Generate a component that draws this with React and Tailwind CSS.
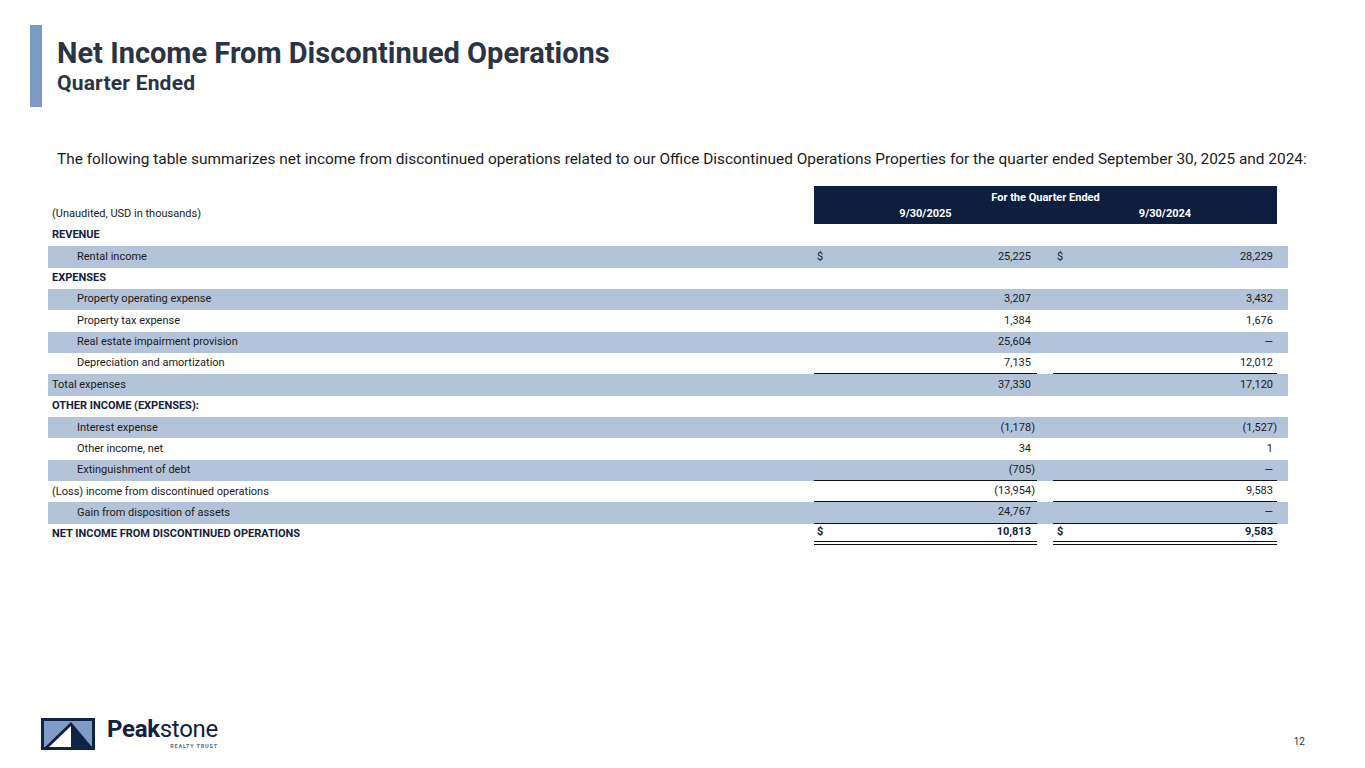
/* ----------------------------------------------------------------------------------------------
App.jsx
Net income from discontinued operations slide
------------------------------------------------------------------------------------------------- */

const rows = [
  { label: "REVENUE", kind: "head" },
  { label: "Rental income", a: "25,225", b: "28,229", dollar: true, indent: true, shade: true },
  { label: "EXPENSES", kind: "head" },
  { label: "Property operating expense", a: "3,207", b: "3,432", indent: true, shade: true },
  { label: "Property tax expense", a: "1,384", b: "1,676", indent: true },
  { label: "Real estate impairment provision", a: "25,604", b: "—", indent: true, shade: true },
  { label: "Depreciation and amortization", a: "7,135", b: "12,012", indent: true, line: "single" },
  { label: "Total expenses", a: "37,330", b: "17,120", shade: true },
  { label: "OTHER INCOME (EXPENSES):", kind: "head" },
  { label: "Interest expense", a: "(1,178)", b: "(1,527)", indent: true, shade: true },
  { label: "Other income, net", a: "34", b: "1", indent: true },
  { label: "Extinguishment of debt", a: "(705)", b: "—", indent: true, shade: true, line: "single" },
  { label: "(Loss) income from discontinued operations", a: "(13,954)", b: "9,583", line: "single" },
  { label: "Gain from disposition of assets", a: "24,767", b: "—", indent: true, shade: true, line: "single" },
  { label: "NET INCOME FROM DISCONTINUED OPERATIONS", a: "10,813", b: "9,583", dollar: true, bold: true, line: "double" },
];

// number with the closing paren hanging to the right, accounting style
function Num({ value }) {
  if (value.endsWith(")")) {
    return (
      <span>
        {value.slice(0, -1)}
        <span className="mr-[-4px]">)</span>
      </span>
    );
  }
  return <span>{value}</span>;
}

function ValueCell({ value, dollar, line, pl, pr }) {
  const lineCls =
    line === "single"
      ? "border-b-[1.5px] border-[#111]"
      : line === "double"
      ? "border-b-4 border-double border-[#111]"
      : "";
  return (
    <div className={`h-full flex items-center justify-between ${pl} ${pr} ${lineCls}`}>
      <span>{dollar ? "$" : ""}</span>
      <Num value={value} />
    </div>
  );
}

function Row({ row }) {
  if (row.kind === "head") {
    return (
      <div className="h-[21.35px] flex items-center pl-[4px] font-bold text-[#14213d]">
        {row.label}
      </div>
    );
  }
  return (
    <div
      className={`h-[21.35px] grid grid-cols-[766px_223px_16px_224px_11px] items-center ${
        row.shade ? "bg-[#b3c3d9]" : ""
      } ${row.bold ? "font-bold text-[#14213d]" : ""}`}
    >
      <div className={row.indent ? "pl-[29px]" : "pl-[4px]"}>{row.label}</div>
      <ValueCell value={row.a} dollar={row.dollar} line={row.line} pl="pl-[3px]" pr="pr-[6px]" />
      <div />
      <ValueCell value={row.b} dollar={row.dollar} line={row.line} pl="pl-[4px]" pr="pr-[4px]" />
      <div />
    </div>
  );
}

function Logo() {
  return (
    <div className="flex items-end gap-[12px]">
      <svg width="54" height="32" viewBox="0 0 54 32">
        <rect x="0" y="0" width="54" height="32" fill="#0f2443" />
        <rect x="3" y="3" width="48" height="26" fill="#7f9cc6" />
        <polygon points="30,4 4,29 51,29" fill="#0f2443" />
        <polygon points="30,8 8,29 30,29" fill="#ffffff" />
      </svg>
      <div className="flex flex-col items-end">
        <div className="text-[24px] leading-[26px] text-[#14213d] tracking-[-0.3px]">
          <span className="font-bold">Peak</span>
          <span>stone</span>
        </div>
        <div className="text-[5.5px] leading-[7px] tracking-[0.8px] text-[#5a6f8f] font-bold mt-[1px]">
          REALTY TRUST
        </div>
      </div>
    </div>
  );
}

export default function App() {
  return (
    <div
      className="w-[1365px] h-[768px] bg-white flex flex-col overflow-hidden"
      style={{ fontFamily: "Roboto, 'Liberation Sans', sans-serif" }}
    >
      {/* Title block */}
      <div className="flex pt-[25px] pl-[30px]">
        <div className="w-[12px] h-[82px] bg-[#7b9bc6]" />
        <div className="pl-[15px] pt-[12px]">
          <h1 className="text-[29px] leading-[32px] font-bold text-[#2b3345]">
            Net Income From Discontinued Operations
          </h1>
          <h2 className="text-[21px] leading-[24px] font-bold text-[#2b3345] tracking-[0.2px] mt-[2px]">
            Quarter Ended
          </h2>
        </div>
      </div>

      {/* Description */}
      <p className="pl-[57px] mt-[42px] text-[15.4px] leading-[20px] text-[#1a1a1a] whitespace-nowrap">
        The following table summarizes net income from discontinued operations related to our Office Discontinued
        Operations Properties for the quarter ended September 30, 2025 and 2024:
      </p>

      {/* Table */}
      <div className="ml-[48px] w-[1240px] mt-[17px] text-[11px] text-[#1a1a1a]">
        <div className="h-[38px] grid grid-cols-[766px_463px_11px]">
          <div className="flex items-end pl-[4px] pb-[2px]">(Unaudited, USD in thousands)</div>
          <div className="bg-[#0c1f3f] text-white font-bold flex flex-col pt-[5px]">
            <div className="text-center leading-[14px]">For the Quarter Ended</div>
            <div className="grid grid-cols-[223px_16px_224px] leading-[14px] mt-[2px]">
              <div className="text-center">9/30/2025</div>
              <div />
              <div className="text-center">9/30/2024</div>
            </div>
          </div>
          <div />
        </div>
        <div className="mt-[1px]">
          {rows.map((row) => (
            <Row key={row.label} row={row} />
          ))}
        </div>
      </div>

      {/* Footer */}
      <div className="mt-auto flex items-end justify-between pl-[41px] pr-[60px] pb-[18px]">
        <Logo />
        <div className="text-[10px] text-[#333] pb-[1px]">12</div>
      </div>
    </div>
  );
}
